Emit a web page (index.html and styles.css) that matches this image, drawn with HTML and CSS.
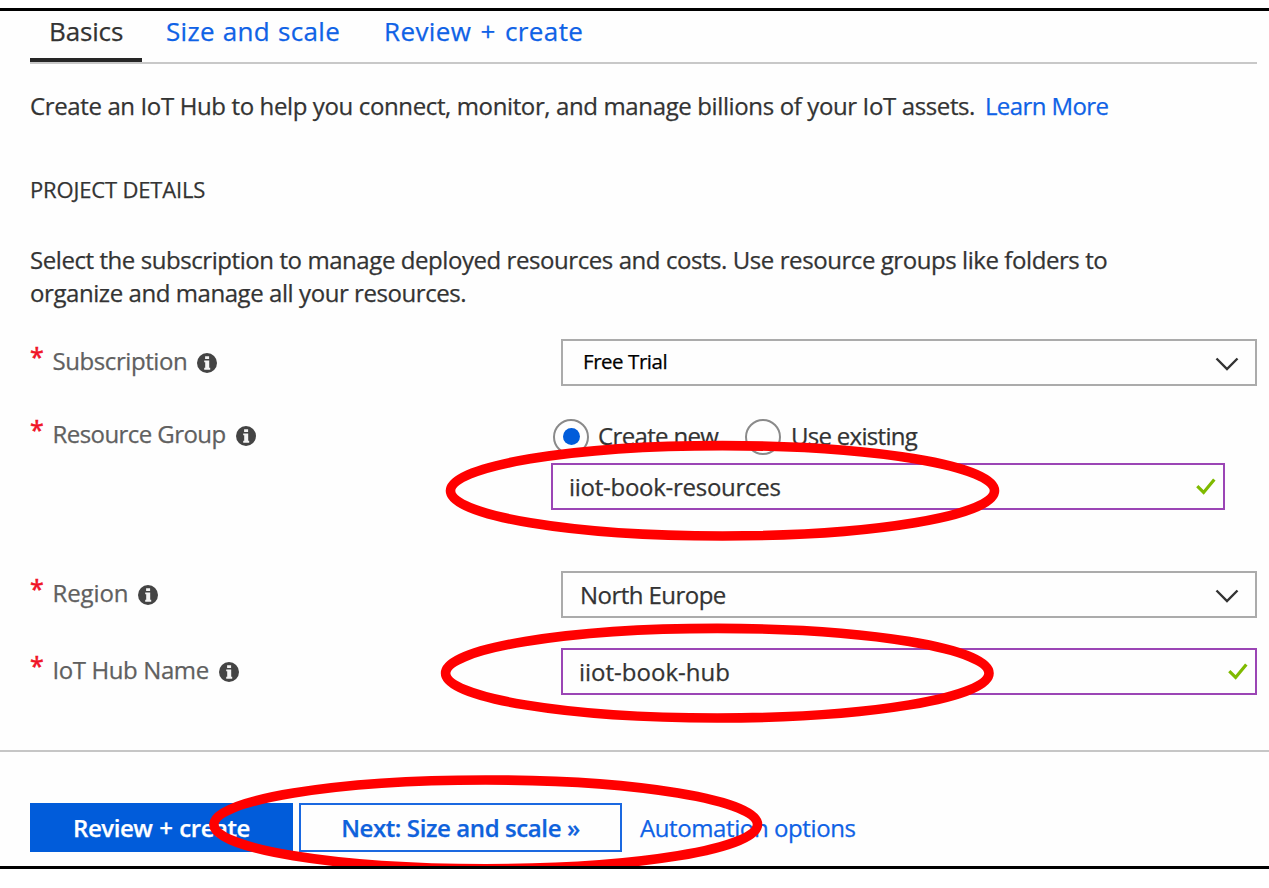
FILE: index.html
```html
<!DOCTYPE html>
<html lang="en">
<head>
<meta charset="utf-8">
<title>IoT Hub</title>
<link rel="stylesheet" href="styles.css">
</head>
<body>
<svg class="symbols" aria-hidden="true">
  <symbol id="info" viewBox="0 0 20 20">
    <circle cx="10" cy="10" r="10" fill="#444"/>
    <path d="M8.1 3.2h4v2.9H8.1zM7.2 7.4h5v7.4h1v1.9H7.2v-1.9h1V9.3h-1z" fill="#f4f4f4"/>
  </symbol>
  <symbol id="chevron" viewBox="0 0 24 14">
    <path d="M1.5 1.5 12 12 22.5 1.5" fill="none" stroke="#333" stroke-width="2.4"/>
  </symbol>
  <symbol id="check" viewBox="0 0 20 17">
    <path d="M1.3 8.2 7.6 14.4 18.3 1.4" fill="none" stroke="#7fba00" stroke-width="3.2"/>
  </symbol>
</svg>
<main class="panel">
  <nav class="tabs">
    <a class="tab tab-active">Basics</a>
    <a class="tab tab-size">Size and scale</a>
    <a class="tab tab-review">Review + create</a>
  </nav>
  <p class="intro">Create an IoT Hub to help you connect, monitor, and manage billions of your IoT assets. <a class="link learn">Learn More</a></p>
  <h2 class="heading">PROJECT DETAILS</h2>
  <p class="description">Select the subscription to manage deployed resources and costs. Use resource groups like folders to<br>organize and manage all your resources.</p>

  <form class="form">
    <div class="row row-subscription">
      <label class="label"><span class="star">*</span><span class="t-subscription">Subscription</span><svg class="info"><use href="#info"/></svg></label>
      <div class="field"><span class="t-free">Free Trial</span><svg class="chevron"><use href="#chevron"/></svg></div>
    </div>
    <div class="row row-group">
      <label class="label"><span class="star">*</span><span class="t-group">Resource Group</span><svg class="info"><use href="#info"/></svg></label>
      <div class="group">
        <div class="radios">
          <span class="radio radio-on"></span><span class="t-new">Create new</span>
          <span class="radio"></span><span class="t-existing">Use existing</span>
        </div>
        <div class="field field-valid"><span class="t-resources">iiot-book-resources</span><svg class="check"><use href="#check"/></svg></div>
      </div>
    </div>
    <div class="row row-region">
      <label class="label"><span class="star">*</span><span class="t-region">Region</span><svg class="info"><use href="#info"/></svg></label>
      <div class="field"><span class="t-north">North Europe</span><svg class="chevron"><use href="#chevron"/></svg></div>
    </div>
    <div class="row row-hub">
      <label class="label"><span class="star">*</span><span class="t-hubname">IoT Hub Name</span><svg class="info"><use href="#info"/></svg></label>
      <div class="field field-valid"><span class="t-hub">iiot-book-hub</span><svg class="check"><use href="#check"/></svg></div>
    </div>
  </form>

  <footer class="footer">
    <a class="button button-primary"><span class="t-create">Review + create</span></a>
    <a class="button button-next"><span class="t-next">Next: Size and scale »</span></a>
    <a class="link automation">Automation options</a>
  </footer>

  <svg class="marks" viewBox="0 0 1269 866" fill="none" stroke="#f00" stroke-width="9.6">
    <ellipse cx="722.5" cy="490.8" rx="272" ry="45.2"/>
    <ellipse cx="717.3" cy="673.2" rx="271.7" ry="44.8"/>
    <ellipse cx="485.7" cy="824.4" rx="271.8" ry="44.4"/>
  </svg>
</main>
</body>
</html>
```
FILE: styles.css
```css
* { box-sizing: border-box; }
body {
  margin: 0;
  background: #fff;
  color: #333;
  font-family: "Open Sans", "Noto Sans", sans-serif;
  font-size: 24px;
  -webkit-text-stroke: 0.25px currentColor;
  overflow: hidden;
}
.symbols { display: none; }
.panel {
  position: relative;
  height: 861px;
  margin-top: 8px;
  border-top: 3px solid #000;
  border-bottom: 3px solid #000;
  background: #fefefe;
  white-space: nowrap;
}
.tabs {
  display: flex;
  height: 53px;
  margin: 0 12px 0 30px;
  border-bottom: 2px solid #c8c8c8;
  font-size: 26px;
  line-height: 41px;
}
.tab { height: 51px; color: #0f62e6; }
.tab-active {
  width: 112px;
  padding-left: 19px;
  border-bottom: 4px solid #262626;
  color: #333;
  letter-spacing: -0.15px;
}
.tab-size { width: 218px; padding-left: 24px; letter-spacing: 0.3px; word-spacing: 1px; }
.tab-review { padding-left: 24px; word-spacing: 2px; letter-spacing: 0.4px; }
.link { color: #0f62e6; }
.intro { margin: 26px 30px 0; line-height: 32px; letter-spacing: -0.375px; }
.learn { margin-left: 4px; letter-spacing: -0.6px; }
.heading {
  margin: 52px 30px 0;
  font-size: 22px;
  font-weight: 400;
  line-height: 30px;
  letter-spacing: -0.17px;
}
.description { margin: 40px 30px 0; line-height: 32.5px; letter-spacing: -0.43px; }
.form { margin: 30px 12px 0 30px; }
.row { display: grid; grid-template-columns: 531px 1fr; }
.row-group { grid-template-columns: 521px 1fr; margin-top: 32px; }
.row-region { margin-top: 61px; }
.row-hub { margin-top: 30px; }
.label { display: flex; height: 43px; align-items: center; color: #606060; }
.row-group .label { height: 31px; }
.star {
  width: 22.5px;
  padding-bottom: 10px;
  color: #f01428;
  font-size: 25px;
  -webkit-text-stroke-width: 0.6px;
}
.info { width: 20px; height: 20px; margin: 5px 0 0 10px; }
.field {
  display: flex;
  height: 47px;
  align-items: center;
  justify-content: space-between;
  padding: 0 16px;
  border: 2px solid #ababab;
}
.field-valid { padding-right: 7px; border-color: #9b45b5; }
.chevron { width: 24px; height: 14px; margin-top: 3px; }
.check { width: 20px; height: 17px; }
.group .field { width: 674px; margin-top: 8px; }
.radios { display: flex; height: 37px; align-items: center; padding-left: 2px; }
.radio {
  display: flex;
  flex: none;
  width: 36px;
  height: 36px;
  align-items: center;
  justify-content: center;
  border: 2px solid #8a8a8a;
  border-radius: 50%;
}
.radio-on::before { content: ""; width: 17px; height: 17px; border-radius: 50%; background: #015cda; }
.t-new { width: 156px; padding: 0 0 2px 9px; letter-spacing: -0.65px; }
.t-existing { padding: 0 0 2px 10px; letter-spacing: -0.7px; }
.t-free { padding: 0 0 4px 4px; color: #000; font-size: 20.5px; letter-spacing: -0.45px; }
.t-subscription { letter-spacing: -0.42px; }
.t-group { letter-spacing: -0.57px; }
.t-region { letter-spacing: -0.1px; }
.t-hubname { letter-spacing: -0.4px; }
.t-resources { letter-spacing: -0.27px; }
.t-north { padding-left: 1px; letter-spacing: -0.55px; }
.footer {
  display: flex;
  margin-top: 55px;
  padding: 51px 30px 0;
  border-top: 2px solid #c6c6c6;
}
.button {
  display: flex;
  height: 49px;
  align-items: center;
  justify-content: center;
  border: 2px solid #1a68e0;
  color: #0f62dc;
  font-weight: 600;
}
.button-primary { width: 263px; background: #015cda; border-color: #015cda; color: #fff; }
.button-next { width: 323px; margin-left: 6px; }
.t-create { letter-spacing: -0.45px; word-spacing: 1px; }
.t-next { letter-spacing: -0.4px; }
.automation { margin-left: 18px; line-height: 50px; letter-spacing: -0.4px; }
.marks { position: absolute; left: 0; top: -11px; width: 1269px; height: 866px; }
```
